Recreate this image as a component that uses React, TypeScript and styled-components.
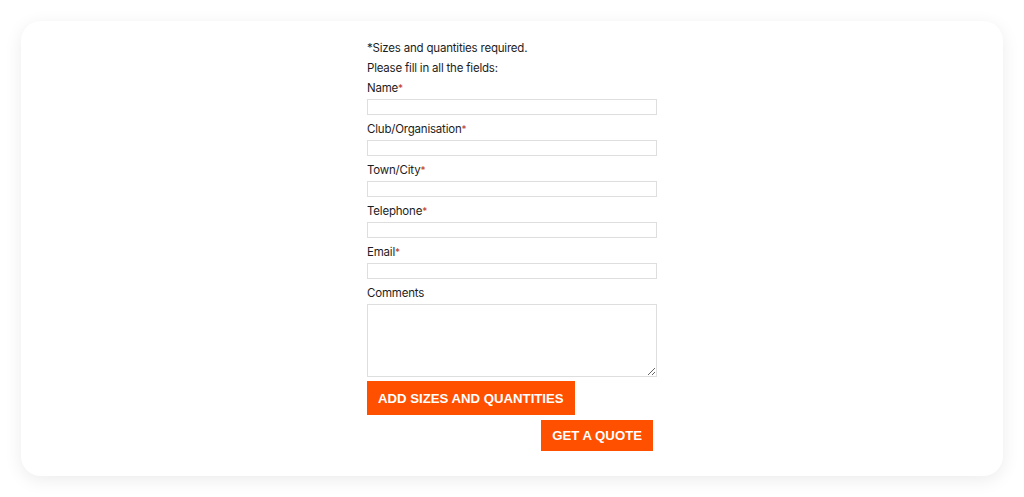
import * as React from 'react';
import styled, { createGlobalStyle } from 'styled-components';

const GlobalStyle = createGlobalStyle`
  html, body {
    margin: 0;
    padding: 0;
    background: #ffffff;
  }
  body {
    font-family: Inter, 'Liberation Sans', Arial, sans-serif;
  }
`;

const Page = styled.div`
  padding: 21px;
  height: 497px;
  box-sizing: border-box;
`;

const Card = styled.div`
  background: #ffffff;
  border-radius: 20px;
  box-shadow: 0 4px 18px rgba(0, 0, 0, 0.08);
  height: 455px;
  display: flex;
  justify-content: center;
  padding-top: 17px;
  box-sizing: border-box;
`;

const Form = styled.form`
  width: 290px;
  display: flex;
  flex-direction: column;
  color: #1d1d1d;
  font-size: 11.5px;
  letter-spacing: -0.2px;
`;

const Note = styled.p`
  margin: 0;
  line-height: 20px;
`;

const Field = styled.div`
  display: flex;
  flex-direction: column;
  margin-bottom: 4px;
`;

const Label = styled.label`
  line-height: 20px;
  margin-bottom: 1px;
`;

const Required = styled.span`
  color: #c0392b;
  font-size: 10px;
`;

const Input = styled.input`
  height: 16px;
  box-sizing: border-box;
  border: 1px solid #dedede;
  background: #fff;
  margin: 0;
  padding: 0 4px;
  outline: none;
`;

const TextArea = styled.textarea`
  height: 73px;
  box-sizing: border-box;
  border: 1px solid #dedede;
  margin: 0;
  padding: 4px;
  resize: vertical;
  outline: none;
`;

const Button = styled.button<{ $align?: 'start' | 'end'; $height: number }>`
  align-self: ${p => (p.$align === 'end' ? 'flex-end' : 'flex-start')};
  height: ${p => p.$height}px;
  background: #ff5000;
  color: #ffffff;
  border: none;
  padding: 0 11px;
  font-family: 'Liberation Sans', Arial, sans-serif;
  font-weight: bold;
  font-size: 13.2px;
  letter-spacing: 0;
  text-transform: uppercase;
  cursor: pointer;
`;

const Actions = styled.div`
  display: flex;
  flex-direction: column;
  gap: 5px;
  padding-right: 4px;
`;

const fields = ['Name', 'Club/Organisation', 'Town/City', 'Telephone', 'Email'];

export default function App() {
  return (
    <Page>
      <GlobalStyle />
      <Card>
        <Form onSubmit={e => e.preventDefault()}>
          <Note>*Sizes and quantities required.</Note>
          <Note>Please fill in all the fields:</Note>
          {fields.map(f => (
            <Field key={f}>
              <Label>
                {f}
                <Required>*</Required>
              </Label>
              <Input type="text" />
            </Field>
          ))}
          <Field>
            <Label>Comments</Label>
            <TextArea />
          </Field>
          <Actions>
            <Button type="button" $height={34}>Add sizes and quantities</Button>
            <Button type="submit" $align="end" $height={31}>Get a quote</Button>
          </Actions>
        </Form>
      </Card>
    </Page>
  );
}
